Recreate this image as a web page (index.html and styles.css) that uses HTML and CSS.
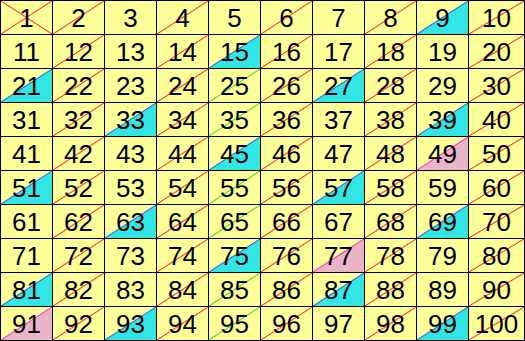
FILE: index.html
```html
<!DOCTYPE html>
<html>
<head>
<meta charset="utf-8">
<link rel="stylesheet" href="styles.css">
</head>
<body>
<div class="grid">
<div class="c one">1</div><div class="c e">2</div><div class="c">3</div><div class="c e">4</div><div class="c">5</div><div class="c e">6</div><div class="c">7</div><div class="c e">8</div><div class="c t">9</div><div class="c e">10</div>
<div class="c">11</div><div class="c e">12</div><div class="c">13</div><div class="c e">14</div><div class="c t">15</div><div class="c e">16</div><div class="c">17</div><div class="c e">18</div><div class="c">19</div><div class="c e">20</div>
<div class="c t">21</div><div class="c e">22</div><div class="c">23</div><div class="c e">24</div><div class="c f">25</div><div class="c e">26</div><div class="c t">27</div><div class="c e">28</div><div class="c">29</div><div class="c e">30</div>
<div class="c">31</div><div class="c e">32</div><div class="c t">33</div><div class="c e">34</div><div class="c f">35</div><div class="c e">36</div><div class="c">37</div><div class="c e">38</div><div class="c t">39</div><div class="c e">40</div>
<div class="c">41</div><div class="c e">42</div><div class="c">43</div><div class="c e">44</div><div class="c t">45</div><div class="c e">46</div><div class="c">47</div><div class="c e">48</div><div class="c s">49</div><div class="c e">50</div>
<div class="c t">51</div><div class="c e">52</div><div class="c">53</div><div class="c e">54</div><div class="c f">55</div><div class="c e">56</div><div class="c t">57</div><div class="c e">58</div><div class="c">59</div><div class="c e">60</div>
<div class="c">61</div><div class="c e">62</div><div class="c t">63</div><div class="c e">64</div><div class="c f">65</div><div class="c e">66</div><div class="c">67</div><div class="c e">68</div><div class="c t">69</div><div class="c e">70</div>
<div class="c">71</div><div class="c e">72</div><div class="c">73</div><div class="c e">74</div><div class="c t">75</div><div class="c e">76</div><div class="c s">77</div><div class="c e">78</div><div class="c">79</div><div class="c e">80</div>
<div class="c t">81</div><div class="c e">82</div><div class="c">83</div><div class="c e">84</div><div class="c f">85</div><div class="c e">86</div><div class="c t">87</div><div class="c e">88</div><div class="c">89</div><div class="c e">90</div>
<div class="c s">91</div><div class="c e">92</div><div class="c t">93</div><div class="c e">94</div><div class="c f">95</div><div class="c e">96</div><div class="c">97</div><div class="c e">98</div><div class="c t">99</div><div class="c e">100</div>
</div>
</body>
</html>
```
FILE: styles.css
```css
html, body {
  margin: 0;
  padding: 0;
  background: #ffffff;
}
.grid {
  display: grid;
  grid-template-columns: repeat(9, 51px) 55px;
  grid-template-rows: repeat(10, 33px);
  gap: 1px;
  padding: 1px;
  background: #000000;
  width: 523px;
  height: 339px;
}
.c {
  background-color: #ffff99;
  font-family: "Liberation Sans", Arial, sans-serif;
  font-size: 26px;
  color: #000000;
  display: flex;
  align-items: center;
  justify-content: center;
  line-height: 1;
}
.e {
  background-image: linear-gradient(to bottom right, transparent calc(50% - 1px), #ff3030 50%, transparent calc(50% + 1px));
}
.f {
  background-image: linear-gradient(to bottom right, transparent calc(50% - 1px), #44dd22 50%, transparent calc(50% + 1px));
}
.t {
  background-image:
    linear-gradient(to bottom right, transparent calc(50% - 1px), #3060ee 50%, transparent calc(50% + 1px)),
    linear-gradient(to bottom right, transparent 50%, #33e6e6 50%);
}
.s {
  background-image:
    linear-gradient(to bottom right, transparent calc(50% - 1px), #ff30cc 50%, transparent calc(50% + 1px)),
    linear-gradient(to bottom right, transparent 50%, #ebb5c9 50%);
}
.one {
  background-image:
    linear-gradient(to bottom right, transparent calc(50% - 1px), #ff3030 50%, transparent calc(50% + 1px)),
    linear-gradient(to bottom left, transparent calc(50% - 1px), #ff3030 50%, transparent calc(50% + 1px));
}
```
